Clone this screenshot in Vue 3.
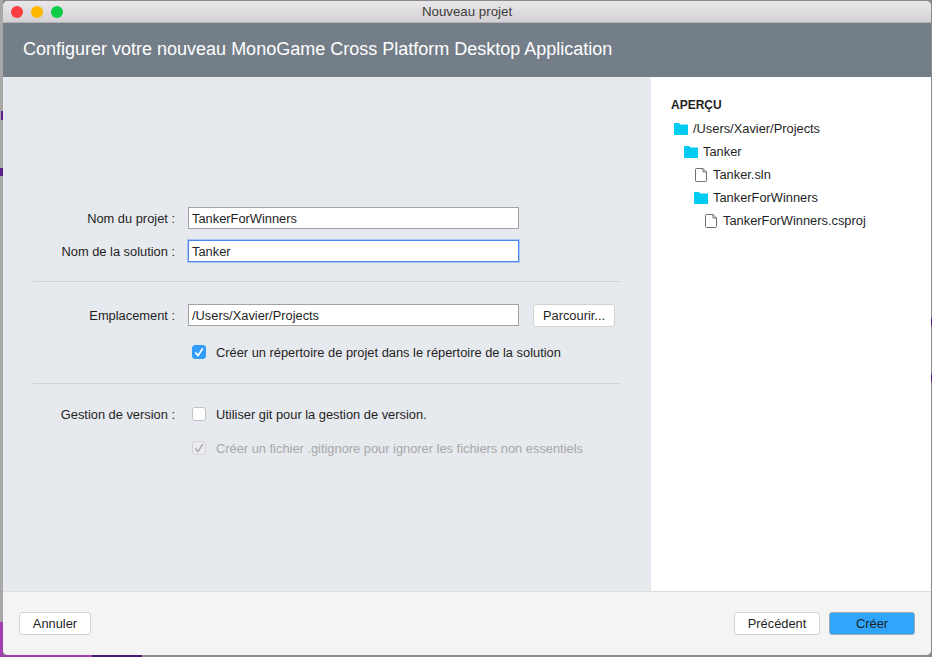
<script setup>
const tree = [
  { name: '/Users/Xavier/Projects', type: 'folder', depth: 0 },
  { name: 'Tanker', type: 'folder', depth: 1 },
  { name: 'Tanker.sln', type: 'file', depth: 2 },
  { name: 'TankerForWinners', type: 'folder', depth: 2 },
  { name: 'TankerForWinners.csproj', type: 'file', depth: 3 }
]
</script>

<template>
  <div class="desktop">
    <div class="window">
      <div class="titlebar">
        <div class="lights">
          <span class="light red"></span>
          <span class="light yellow"></span>
          <span class="light green"></span>
        </div>
        <span class="win-title">Nouveau projet</span>
      </div>
      <div class="banner">Configurer votre nouveau MonoGame Cross Platform Desktop Application</div>
      <div class="body">
        <div class="form">
          <div class="row">
            <label class="lbl">Nom du projet :</label>
            <div class="input">TankerForWinners</div>
          </div>
          <div class="row second">
            <label class="lbl">Nom de la solution :</label>
            <div class="input focused">Tanker</div>
          </div>
          <div class="sep sep-one"></div>
          <div class="row">
            <label class="lbl">Emplacement :</label>
            <div class="input">/Users/Xavier/Projects</div>
            <button class="btn browse">Parcourir...</button>
          </div>
          <div class="check-row dir-check">
            <span class="box checked">
              <svg viewBox="0 0 14 14" width="14" height="14"><path d="M3.2 7.4 6 10.6 10.8 3.2" fill="none" stroke="#fff" stroke-width="1.7"/></svg>
            </span>
            <span class="check-text">Créer un répertoire de projet dans le répertoire de la solution</span>
          </div>
          <div class="sep sep-two"></div>
          <div class="check-row">
            <label class="lbl git-lbl">Gestion de version :</label>
            <span class="box"></span>
            <span class="check-text">Utiliser git pour la gestion de version.</span>
          </div>
          <div class="check-row ignore-check">
            <span class="box disabled">
              <svg viewBox="0 0 14 14" width="14" height="14"><path d="M3.2 7.4 6 10.6 10.8 3.2" fill="none" stroke="#a9a9ab" stroke-width="1.5"/></svg>
            </span>
            <span class="check-text muted">Créer un fichier .gitignore pour ignorer les fichiers non essentiels</span>
          </div>
        </div>
        <div class="preview">
          <div class="preview-title">APERÇU</div>
          <div v-for="item in tree" :key="item.name" class="node" :style="{ paddingLeft: item.depth * 10 + 'px' }">
            <span class="node-icon">
              <svg v-if="item.type === 'folder'" viewBox="0 0 14 12" width="14" height="12"><path d="M0 1C0 .4.4 0 1 0h3.600c.4 0 .7.2.9.5l.6 1h6.900c.6 0 1 .4 1 1V11c0 .6-.4 1-1 1H1c-.6 0-1-.4-1-1z" fill="#00ccf2"/></svg>
              <svg v-else class="file-icon" viewBox="0 0 12 14" width="12" height="14"><path d="M1.500.5h6.500l3.500 3.500v8.500a1 1 0 0 1-1 1h-9a1 1 0 0 1-1-1v-11a1 1 0 0 1 1-1zM8 .5v3.500h3.500" fill="#fff" stroke="#5f5f5f" stroke-width=".9"/></svg>
            </span>
            <span>{{ item.name }}</span>
          </div>
        </div>
      </div>
      <div class="footer">
        <button class="btn foot-btn">Annuler</button>
        <div class="foot-right">
          <button class="btn foot-btn">Précédent</button>
          <button class="btn foot-btn primary">Créer</button>
        </div>
      </div>
    </div>
  </div>
</template>

<style scoped>
.desktop {
  width: 932px;
  height: 657px;
  background-color: #8a8a8a;
  background-image:
    linear-gradient(#5d1f8c, #5d1f8c),
    linear-gradient(#4a1a78, #4a1a78),
    linear-gradient(#a23fae, #a23fae),
    linear-gradient(#a23fae, #a23fae),
    linear-gradient(#5d1f8c, #5d1f8c),
    linear-gradient(#5d1f8c, #5d1f8c),
    linear-gradient(#5d1f8c, #5d1f8c),
    linear-gradient(#a8a8a8, #a8a8a8);
  background-repeat: no-repeat;
  background-size: 2px 9px, 50px 2px, 92px 2px, 3px 35px, 3px 8px, 1px 8px, 1px 8px, 3px 657px;
  background-position: 1px 111px, 92px 655px, 0 655px, 0 622px, 0 168px, 931px 318px, 931px 374px, 0 0;
  overflow: hidden;
  padding: 1px 0 0 3px;
  box-sizing: border-box;
  font-family: "Liberation Sans", Arial, sans-serif;
  font-size: 12.85px;
  color: #1f1f1f;
}
.window {
  width: 928px;
  height: 654px;
  display: flex;
  flex-direction: column;
  background: #f4f4f4;
  border-radius: 5px;
  overflow: hidden;
}
.titlebar {
  height: 22px;
  position: relative;
  display: flex;
  align-items: center;
  justify-content: center;
  background: linear-gradient(#e9e7e9, #d3d1d3);
  border-bottom: 1px solid #b4b2b4;
  box-sizing: border-box;
  flex: none;
}
.lights {
  position: absolute;
  left: 8px;
  top: 5px;
  display: flex;
  gap: 8px;
}
.light {
  width: 12px;
  height: 12px;
  border-radius: 50%;
}
.red { background: #fc3d3f; }
.yellow { background: #fdb900; }
.green { background: #0ccb45; }
.win-title {
  font-size: 13.3px;
  color: #3c3c3c;
}
.banner {
  height: 54px;
  flex: none;
  background: #747e88;
  color: #fff;
  font-size: 18px;
  line-height: 53px;
  padding-left: 20px;
}
.body {
  flex: 1;
  display: flex;
  min-height: 0;
}
.form {
  width: 648px;
  background: #e6e9ed;
  padding: 130px 30px 0;
  box-sizing: border-box;
}
.row {
  display: flex;
  align-items: flex-start;
}
.second { margin-top: 11px; }
.lbl {
  width: 142px;
  height: 22px;
  margin-right: 13px;
  text-align: right;
  line-height: 24px;
  flex: none;
}
.git-lbl {
  height: 16px;
  line-height: 18px;
  margin-right: 17px;
}
.input {
  width: 331px;
  height: 22px;
  box-sizing: border-box;
  border: 1px solid #a3a3a3;
  background: #fff;
  padding-left: 3px;
  line-height: 22px;
  flex: none;
}
.focused {
  border-color: #4c86ee;
  box-shadow: 0 0 0 1px #a9c4f5;
}
.sep {
  height: 1px;
  width: 588px;
  background: #d3d4d8;
}
.sep-one { margin: 19px 0 22px; }
.sep-two { margin: 23px 0 22px; }
.btn {
  font: inherit;
  color: inherit;
  background: #fff;
  border: 1px solid #d2d2d2;
  border-radius: 3px;
  height: 23px;
  padding: 0;
}
.browse {
  width: 82px;
  margin-left: 14px;
}
.check-row {
  display: flex;
  align-items: center;
  height: 16px;
}
.dir-check {
  margin-top: 17px;
  padding-left: 159px;
}
.ignore-check {
  margin-top: 18px;
  padding-left: 159px;
}
.box {
  width: 14px;
  height: 14px;
  margin-right: 10px;
  border: 1px solid #c4c4c6;
  border-radius: 3px;
  background: #fff;
  box-sizing: border-box;
  flex: none;
  display: flex;
  align-items: center;
  justify-content: center;
}
.box svg { flex: none; }
.box.checked {
  background: #2f9bfa;
  border-color: #2f9bfa;
}
.box.disabled {
  background: #ececef;
  border-color: #d3d4d8;
}
.muted { color: #a6a7aa; }
.preview {
  flex: 1;
  background: #fff;
  padding: 20px 0 0 20px;
}
.preview-title {
  font-weight: bold;
  font-size: 12px;
  height: 16px;
  line-height: 16px;
  margin-bottom: 4px;
}
.node {
  height: 23px;
  display: flex;
  align-items: center;
  margin-left: 3px;
}
.node-icon {
  width: 15px;
  margin-right: 4px;
  display: flex;
  justify-content: flex-start;
  flex: none;
}
.file-icon { margin-left: 1px; }
.footer {
  height: 64px;
  flex: none;
  display: flex;
  align-items: center;
  justify-content: space-between;
  padding: 0 16px;
  background: #f4f4f4;
  border-top: 1px solid #dedede;
  box-sizing: border-box;
}
.foot-right {
  display: flex;
  gap: 9px;
}
.foot-btn { width: 72px; }
.foot-right .foot-btn { width: 86px; }
.primary {
  background: #2fa5fb;
  border-color: #a2a9b0;
}
</style>
